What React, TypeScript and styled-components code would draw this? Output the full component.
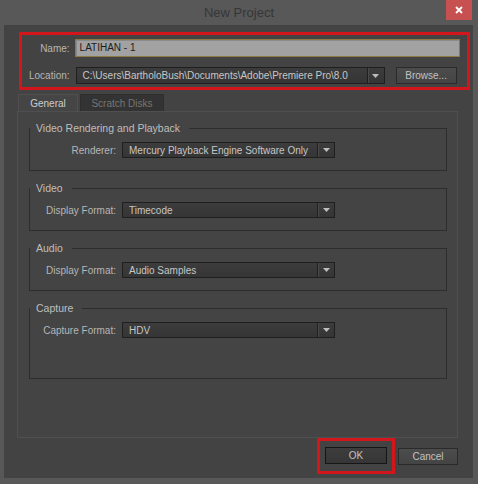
import React from 'react'
import styled, { createGlobalStyle } from 'styled-components'

const Global = createGlobalStyle`
  html, body {
    margin: 0;
    padding: 0;
    background: #585858;
  }
  body {
    font-family: "Liberation Sans", Arial, sans-serif;
    font-size: 10px;
  }
`

const Window = styled.div`
  width: 478px;
  height: 484px;
  background: #585858;
  display: flex;
  flex-direction: column;
  overflow: hidden;
`

const TitleBar = styled.div`
  height: 25px;
  flex-shrink: 0;
  display: grid;
  grid-template-columns: 1fr auto 1fr;
  align-items: start;
`

const Title = styled.div`
  grid-column: 2;
  font-size: 13px;
  line-height: 25px;
  color: #363636;
`

const Close = styled.div`
  grid-column: 3;
  justify-self: end;
  width: 26px;
  height: 20px;
  margin-right: 6px;
  background: #c75050;
  display: flex;
  align-items: center;
  justify-content: center;
`

const Dialog = styled.div`
  flex: 1;
  margin: 0 5px 6px 4px;
  background: #434343;
  padding: 7px 15px 4px 13px;
  display: flex;
  flex-direction: column;
`

const Highlight = styled.div`
  box-sizing: border-box;
  width: 451px;
  margin-left: 2px;
  border: 3px solid #d3161c;
  padding: 4px 7px 3px 7px;
  display: grid;
  grid-template-columns: auto 1fr;
  column-gap: 5px;
  row-gap: 10px;
  align-items: center;
`

const Label = styled.div`
  color: #b6b6b6;
  text-align: right;
  white-space: nowrap;
`

const TextInput = styled.div`
  box-sizing: border-box;
  height: 18px;
  border: 1px solid #8c7944;
  background: #a2a2a2;
  box-shadow: inset 1px 1px 0 #8a8a8a;
  color: #1c1c1c;
  padding-left: 4px;
  line-height: 16px;
`

const LocationRow = styled.div`
  display: flex;
  align-items: center;
  padding-left: 1px;
`

const Select = styled.div<{ $w: number; $h?: number }>`
  box-sizing: border-box;
  width: ${p => p.$w}px;
  height: ${p => p.$h ?? 16}px;
  border: 1px solid #1f1f1f;
  background: linear-gradient(#3c3c3c, #353535);
  color: #c6c6c6;
  display: flex;
  align-items: stretch;
`

const SelectText = styled.div`
  flex: 1;
  padding-left: 6px;
  display: flex;
  align-items: center;
  white-space: nowrap;
  overflow: hidden;
`

const SelectArrow = styled.div`
  width: 16px;
  border-left: 1px solid #1f1f1f;
  box-shadow: inset 1px 0 0 #4a4a4a;
  display: flex;
  align-items: center;
  justify-content: center;
`

const Button = styled.div<{ $w: number; $default?: boolean }>`
  box-sizing: border-box;
  width: ${p => p.$w}px;
  height: 17px;
  border: 1px solid ${p => (p.$default ? '#161616' : '#2a2a2a')};
  background: ${p =>
    p.$default ? 'linear-gradient(#3d3d3d, #363636)' : 'linear-gradient(#4c4c4c, #444444)'};
  color: #c2c2c2;
  display: flex;
  align-items: center;
  justify-content: center;
`

const BrowseButton = styled(Button)`
  margin-left: 11px;
`

const Tabs = styled.div`
  display: flex;
  gap: 2px;
  margin: 4px 0 0 1px;
  height: 17px;
`

const Tab = styled.div<{ $active?: boolean; $w: number }>`
  box-sizing: border-box;
  width: ${p => p.$w}px;
  height: 17px;
  display: flex;
  align-items: center;
  justify-content: center;
  background: ${p => (p.$active ? '#454545' : '#333333')};
  color: ${p => (p.$active ? '#cdcdcd' : '#757575')};
  border: 1px solid ${p => (p.$active ? '#4f4f4f' : '#2e2e2e')};
  border-bottom: none;
`

const Panel = styled.div`
  box-sizing: border-box;
  width: 441px;
  height: 327px;
  border: 1px solid #4f4f4f;
  background: #444444;
  padding: 10px 10px 0 11px;
  display: flex;
  flex-direction: column;
  gap: 11px;
`

const Group = styled.fieldset`
  margin: 0;
  padding: 0;
  min-width: 0;
  border: 1px solid #2d2d2d;
`

const Legend = styled.legend`
  margin-left: 0;
  padding: 0 9px 0 6px;
  line-height: 13px;
  font-size: 10.5px;
  color: #bebebe;
`

const GroupRow = styled.div<{ $tall?: boolean }>`
  display: grid;
  grid-template-columns: 78px 213px;
  column-gap: 6px;
  align-items: center;
  padding: 7px 0 ${p => (p.$tall ? 40 : 12)}px 8px;
`

const Footer = styled.div`
  margin-top: auto;
  display: flex;
  justify-content: flex-end;
  align-items: center;
  gap: 3px;
`

const FocusMark = styled.div`
  border: 3px solid #d3161c;
  padding: 6px 5px 7px 5px;
`

const Arrow = () => (
  <svg width="7" height="4" viewBox="0 0 7 4">
    <polygon points="0,0 7,0 3.5,4" fill="#bdbdbd" />
  </svg>
)

const Dropdown = ({ value, w, h }: { value: string; w: number; h?: number }) => (
  <Select $w={w} $h={h}>
    <SelectText>{value}</SelectText>
    <SelectArrow>
      <Arrow />
    </SelectArrow>
  </Select>
)

const groups = [
  { title: 'Video Rendering and Playback', label: 'Renderer:', value: 'Mercury Playback Engine Software Only' },
  { title: 'Video', label: 'Display Format:', value: 'Timecode' },
  { title: 'Audio', label: 'Display Format:', value: 'Audio Samples' },
  { title: 'Capture', label: 'Capture Format:', value: 'HDV', tall: true },
]

export default function App() {
  return (
    <>
      <Global />
      <Window>
        <TitleBar>
          <Title>New Project</Title>
          <Close>
            <svg width="8" height="8" viewBox="0 0 8 8">
              <path d="M1 1 L7 7 M7 1 L1 7" stroke="#fff" strokeWidth="1.8" />
            </svg>
          </Close>
        </TitleBar>

        <Dialog>
          <Highlight>
            <Label>Name:</Label>
            <TextInput>LATIHAN - 1</TextInput>
            <Label>Location:</Label>
            <LocationRow>
              <Dropdown w={309} h={17} value="C:\Users\BartholoBush\Documents\Adobe\Premiere Pro\8.0" />
              <BrowseButton $w={61}>Browse...</BrowseButton>
            </LocationRow>
          </Highlight>

          <Tabs>
            <Tab $active $w={60}>General</Tab>
            <Tab $w={84}>Scratch Disks</Tab>
          </Tabs>

          <Panel>
            {groups.map(g => (
              <Group key={g.title}>
                <Legend>{g.title}</Legend>
                <GroupRow $tall={g.tall}>
                  <Label>{g.label}</Label>
                  <Dropdown w={213} value={g.value} />
                </GroupRow>
              </Group>
            ))}
          </Panel>

          <Footer>
            <FocusMark>
              <Button $w={62} $default>OK</Button>
            </FocusMark>
            <Button $w={60}>Cancel</Button>
          </Footer>
        </Dialog>
      </Window>
    </>
  )
}
